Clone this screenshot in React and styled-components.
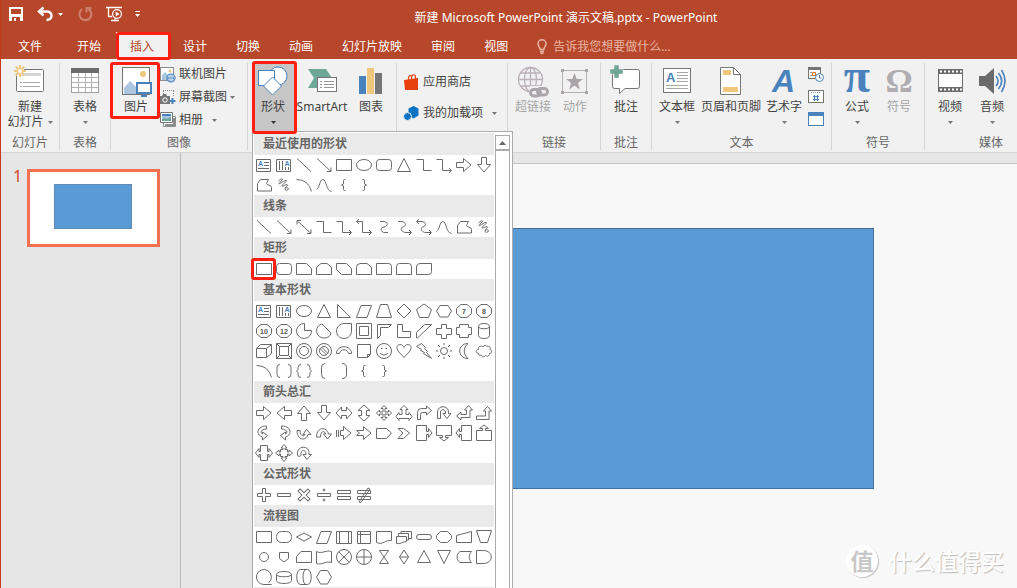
import * as React from "react";
import { useState } from "react";
import styled, { createGlobalStyle } from "styled-components";

const GlobalStyle = createGlobalStyle`
  * {
    box-sizing: border-box;
  }
  body {
    margin: 0;
    overflow: hidden;
    background: #e6e6e6;
    color: #444444;
    font-family: "Noto Sans", "Noto Sans CJK SC", sans-serif;
    font-size: 12px;
    line-height: 16px;
  }
  button, input {
    font: inherit;
    color: inherit;
    border: none;
    padding: 0;
    margin: 0;
    background: none;
  }
  svg {
    display: block;
    flex: none;
    overflow: visible;
  }
`;

const App = styled.div`
  display: flex;
  flex-direction: column;
  height: 100vh;
  overflow: hidden;
  border-left: 1px solid #c43a1c;
  position: relative;
`;

/* ---------- title bar and tabs ---------- */

const Header = styled.header`
  flex: none;
  background: #b7472a;
  color: #ffffff;
`;

const TitleBar = styled.div`
  display: flex;
  align-items: center;
  height: 32px;
  padding: 0 26px 0 8px;
`;

const QuickAccess = styled.div`
  display: flex;
  align-items: center;
  height: 28px;
  align-self: flex-start;
`;

const QuickButton = styled.button`
  display: flex;
  align-items: center;
  gap: 4px;
  margin-right: ${(props) => props.$space || 0}px;
  opacity: ${(props) => (props.disabled ? 0.3 : 1)};
`;

const Title = styled.h1`
  flex: 1;
  margin: 0;
  padding-top: 4px;
  font-size: 12px;
  font-weight: 400;
  text-align: center;
  white-space: nowrap;
`;

const Tabs = styled.nav`
  display: flex;
  align-items: stretch;
  gap: 1px;
  height: 27px;
`;

const Tab = styled.button`
  position: relative;
  padding: 2px 14px 0;
  white-space: nowrap;
  background: ${(props) => (props.$active ? "#f1f1f1" : "transparent")};
  color: ${(props) => (props.$active ? "#b7472a" : "#ffffff")};
`;

const FileTab = styled(Tab)`
  padding: 2px 20px 0 17px;
`;

const TellMe = styled.label`
  display: flex;
  align-items: center;
  gap: 6px;
  padding: 2px 0 0 14px;
  color: #e8b5a5;

  input {
    width: 160px;
    outline: none;
  }
  input::placeholder {
    color: #e8b5a5;
    opacity: 1;
  }
`;

/* red frame that points out a step of the tutorial */
const Mark = styled.span`
  position: absolute;
  inset: ${(props) => props.$inset};
  border: 3px solid #ff1e10;
  border-radius: 3px;
  pointer-events: none;
  z-index: 6;
`;

/* ---------- ribbon ---------- */

const Ribbon = styled.div`
  flex: none;
  display: flex;
  padding: 4px 0 2px;
  background: #f1f1f1;
  border-bottom: 1px solid #d5d5d5;
`;

const Group = styled.section`
  flex: none;
  width: ${(props) => props.$width}px;
  border-right: 1px solid #d5d5d5;
`;

const GroupBody = styled.div`
  display: flex;
  height: 72px;
  padding-left: ${(props) => props.$indent || 0}px;
`;

const GroupLabel = styled.div`
  height: 15px;
  line-height: 16px;
  text-align: center;
  color: #666666;
`;

const LargeButton = styled.button`
  position: relative;
  flex: none;
  display: flex;
  flex-direction: column;
  align-items: center;
  width: ${(props) => props.$width}px;
  padding-top: 3px;
  white-space: nowrap;
  background: ${(props) => (props.$pressed ? "#c6c6c6" : "transparent")};
  color: ${(props) => (props.disabled ? "#a6a6a6" : "#444444")};
`;

const ButtonText = styled.span`
  padding-top: 1px;
`;

const SecondLine = styled.span`
  display: flex;
  align-items: center;
  gap: 4px;
  height: 14px;
`;

const SmallColumn = styled.div`
  display: flex;
  flex-direction: column;
  gap: ${(props) => props.$gap || 1}px;
  padding-top: ${(props) => props.$top || 0}px;
`;

const SmallButton = styled.button`
  display: flex;
  align-items: center;
  gap: 3px;
  height: 22px;
  white-space: nowrap;

  svg:last-child:not(:first-child) {
    margin-left: ${(props) => props.$caretGap || 0}px;
  }
`;

const MenuAnchor = styled.div`
  position: relative;
  display: flex;
`;

/* ---------- shapes menu ---------- */

const Menu = styled.div`
  position: absolute;
  top: 68px;
  left: 0;
  z-index: 5;
  display: flex;
  padding: 1px 2px 0 1px;
  background: #ffffff;
  border: 1px solid #ababab;
`;

const Gallery = styled.div`
  width: 240px;
`;

const GalleryHeading = styled.h2`
  height: 22px;
  margin: 0;
  padding-left: 9px;
  background: #eaeaea;
  color: #666666;
  font-size: 12px;
  font-weight: 700;
  line-height: 22px;
`;

const ShapeGrid = styled.div`
  display: grid;
  grid-template-columns: repeat(12, 20px);
  grid-auto-rows: 20px;
`;

const ShapeButton = styled.button`
  position: relative;
  width: 20px;
  height: 20px;

  svg {
    fill: none;
    stroke: #6a6a6a;
  }
  text {
    stroke: none;
    fill: #555555;
    font: 700 7px "Liberation Sans", sans-serif;
    text-anchor: middle;
  }
  .letter {
    fill: #4a82bd;
    font-size: 7px;
  }
`;

const Scrollbar = styled.div`
  display: flex;
  flex-direction: column;
  width: 15px;
  margin: 2px 0 0 1px;
`;

const ScrollUp = styled.button`
  display: flex;
  align-items: center;
  justify-content: center;
  height: 15px;
  border: 1px solid #ababab;
`;

const ScrollThumb = styled.div`
  flex: 1;
  border: 1px solid #ababab;
`;

/* ---------- slides ---------- */

const Workspace = styled.main`
  flex: 1;
  display: flex;
  min-height: 0;
`;

const SlidePane = styled.aside`
  flex: none;
  display: flex;
  align-items: flex-start;
  width: 180px;
  padding: 16px 20px 0 12px;
  border-right: 1px solid #bcbcbc;
`;

const SlideNumber = styled.span`
  width: 14px;
  color: #d24726;
  font-size: 16px;
  line-height: 14px;
`;

const Thumbnail = styled.button`
  display: flex;
  align-items: center;
  justify-content: center;
  flex: none;
  width: 133px;
  height: 78px;
  padding: 0 2px 4px 0;
  background: #ffffff;
  border: 3px solid #f37053;
`;

const ThumbnailShape = styled.span`
  width: 78px;
  height: 45px;
  background: #5b9bd5;
  border: 1px solid #5f8bb5;
`;

const Slide = styled.div`
  flex: 1;
  margin: 10px 0 0 102px;
  padding: 64px 143px 0 139px;
  background: #f8f8f8;
  border-top: 1px solid #c6c6c6;
`;

const SlideShape = styled.div`
  height: 261px;
  background: #5b9bd5;
  border: 1px solid #41719c;
`;

const Watermark = styled.div`
  position: absolute;
  right: 13px;
  bottom: 11px;
  display: flex;
  align-items: flex-start;
  gap: 11px;
  height: 32px;
  color: #ffffff;
  font-family: "Noto Sans CJK SC", sans-serif;
  font-size: 23px;
  font-weight: 500;
  line-height: 30px;
  text-shadow: 1px 1px 1px #bdbdbd;
`;

const WatermarkBadge = styled.span`
  width: 32px;
  height: 32px;
  border-radius: 50%;
  background: #ffffff;
  box-shadow: 1px 1px 1px #c4c4c4;
  color: #c8c8c8;
  font-weight: 700;
  text-align: center;
  text-shadow: none;
`;

/* ---------- icons ---------- */

const BLUE = "#4a82bd";
const GOLD = "#eec77c";
const GREEN = "#6fa796";
const GREY = "#767676";

const Caret = ({ color = "#777777" }) => (
  <svg width="5" height="3" viewBox="0 0 5 3">
    <path d="M0 0h5L2.500 3z" fill={color} />
  </svg>
);

const Icon = ({ size = 32, children }) => (
  <svg width={size} height={size} viewBox={`0 0 ${size} ${size}`} fill="none">
    {children}
  </svg>
);

const icons = {
  save: (
    <Icon size={16}>
      <path d="M0 1h14v14H0zM2 3v5h10V3zM3 11v4h8v-4z" fill="#fff" fillRule="evenodd" />
      <path d="M5 12h2v3H5z" fill="#fff" />
    </Icon>
  ),
  undo: (
    <Icon size={16}>
      <path d="M1 5.500h7.500c3.500 0 5 1.700 5 4.300 0 2.500-2 4.200-5 4.200" stroke="#fff" strokeWidth="2.400" />
      <path d="M5.500 1.500L1 5.500l4.500 4" stroke="#fff" strokeWidth="2.400" />
    </Icon>
  ),
  redo: (
    <Icon size={16}>
      <path d="M5 3.200A6 6 0 1 0 11.500 3" stroke="#fff" strokeWidth="2.200" />
      <path d="M9.500 1v5.500M8.500 2h6" stroke="#fff" strokeWidth="2" />
    </Icon>
  ),
  show: (
    <Icon size={16}>
      <path d="M0 1.500h16M2.500 2v8.500H6M5 14.500h8M9 12.500v2" stroke="#fff" strokeWidth="1.300" />
      <circle cx="11" cy="8" r="4.400" fill="#b7472a" stroke="#fff" strokeWidth="1.200" />
      <path d="M9.700 5.500v5L13.500 8z" fill="#fff" />
    </Icon>
  ),
  more: (
    <svg width="7" height="7" viewBox="0 0 7 7">
      <path d="M1 0h5v1H1zM1 3h5L3.500 6z" fill="#fff" />
    </svg>
  ),
  bulb: (
    <svg width="10" height="15" viewBox="0 0 10 15" fill="none" stroke="#e8b5a5" strokeWidth="1.500">
      <path d="M3.200 10.500C3.200 8.500 1 7.500 1 4.800a4 4 0 0 1 8 0c0 2.700-2.200 3.700-2.200 5.700zM3 12.500h4M3.500 14.300h3" />
    </svg>
  ),
  newSlide: (
    <Icon>
      <rect x="2.500" y="3.500" width="27" height="22" rx="1" fill="#fff" stroke={GREY} />
      <path d="M6 7h21v3H6z" fill="#d4d4d4" />
      <path d="M6 16.500h2m1 0h17M6 20.500h2m1 0h17" stroke="#a8a8a8" />
      <circle cx="6" cy="5" r="4.500" fill="#f1f1f1" />
      <path d="M6-1v12M0 5h12M1.800.8l8.400 8.400M10.200.8L1.800 9.200" stroke={GOLD} strokeWidth="2" />
      <circle cx="6" cy="5" r="2" fill="#fff" />
    </Icon>
  ),
  table: (
    <Icon>
      <rect x="2.500" y="2.500" width="27" height="24" fill="#fff" stroke="#a0a0a0" />
      <path d="M9.500 7v19M16.500 7v19M22.500 7v19M3 11.500h26M3 16.500h26M3 21.500h26" stroke="#b4b4b4" />
      <path d="M2 2h28v5H2z" fill="#6d6d6d" />
    </Icon>
  ),
  picture: (
    <Icon>
      <rect x="2.500" y="1.500" width="27" height="27" fill="#fff" stroke={GREY} />
      <circle cx="23" cy="8" r="3" fill={GOLD} />
      <path d="M4 28v-6l6-7 8 8v5z" fill="#adc6e0" />
      <rect x="17" y="17" width="14" height="10" fill="#fff" stroke={BLUE} strokeWidth="2" />
      <path d="M23 28h2v1h2v2h-6v-2h2z" fill={BLUE} />
    </Icon>
  ),
  onlinePicture: (
    <Icon size={16}>
      <rect x=".5" y="1.500" width="13" height="13" fill="#fff" stroke="#8c8c8c" />
      <circle cx="10" cy="5" r="1.500" fill={GOLD} />
      <path d="M2 14V9l3-3 3 3v5z" fill="#adc6e0" />
      <circle cx="11" cy="12" r="4" fill="#fff" stroke={BLUE} strokeWidth="1.200" />
      <path d="M7 12h8M11 8v8M9.500 8.500c-1 2-1 5 0 7M12.500 8.500c1 2 1 5 0 7" stroke={BLUE} strokeWidth=".8" />
    </Icon>
  ),
  screenshot: (
    <Icon size={16}>
      <path d="M3 1.500h12M3.500 2v5M13.500 2v5" stroke="#8c8c8c" strokeDasharray="1 1" />
      <path d="M0 7h2l1-2h3l1 2h3v8H0z" fill={GREY} />
      <circle cx="5" cy="11" r="2.200" fill={GREY} stroke="#fff" />
      <path d="M12.500 9v6M9.500 12h6" stroke={BLUE} strokeWidth="2" />
    </Icon>
  ),
  album: (
    <Icon size={16}>
      <path d="M3.500 4.500h12v10h-12z" fill="#fff" stroke="#8c8c8c" />
      <path d="M.5.500h12v10H.5z" fill="#fff" stroke={GREY} />
      <path d="M2 2h9v7H2z" fill="#a5c5e4" />
      <path d="M2 2h9v2H2z" fill={BLUE} />
      <path d="M2 9V7l3-1 2 1 4-2v4z" fill={GREEN} />
      <path d="M14 6v7H5" stroke="#8c8c8c" strokeWidth="2" />
    </Icon>
  ),
  shapes: (
    <Icon>
      <circle cx="21" cy="10" r="9" fill="#fff" stroke={BLUE} />
      <path d="M1.500 4.500h16v15h-16z" fill="#fff" stroke={BLUE} />
      <path d="M15.500 11l9 9-9 9-9-9z" fill="#fff" stroke={BLUE} />
    </Icon>
  ),
  smartArt: (
    <Icon>
      <path d="M2 3h18l6 9-6 10H2l6-10z" fill={GREEN} />
      <rect x="11.500" y="11.500" width="19" height="14" fill="#fff" stroke={GREY} />
      <path d="M14 15.500h2m2 0h10M14 18.500h2m2 0h10M14 21.500h2m2 0h10" stroke="#999" />
    </Icon>
  ),
  chart: (
    <Icon>
      <path d="M4 10h7v18H4z" fill={BLUE} />
      <path d="M12 2h7v26h-7z" fill={GOLD} />
      <path d="M20 7h7v21h-7z" fill={GREY} />
    </Icon>
  ),
  store: (
    <Icon size={16}>
      <path d="M0 6l14-2v12H1z" fill="#e8400c" />
      <path d="M4.500 8V4c0-3 3-3 3.500-1M7.500 6V3c0-3 4-3 4 0v3" stroke="#e8400c" strokeWidth="1.200" />
    </Icon>
  ),
  addin: (
    <Icon size={16}>
      <path d="M9.500 1l5 2.500v7l-5 3-5-3v-7z" fill="#0b72c4" />
      <circle cx="3.500" cy="11.500" r="4" fill="#0b72c4" stroke="#f1f1f1" />
    </Icon>
  ),
  link: (
    <Icon>
      <g stroke="#b9b2b9" strokeWidth="1.300">
        <circle cx="13.500" cy="13.500" r="12" />
        <ellipse cx="13.500" cy="13.500" rx="6" ry="12" />
        <path d="M13.500 1.500v24M1.500 13.500h24M3.500 7h20M3.500 20h20" />
      </g>
      <path d="M13 20h12v2h7v10H14l-2-4z" fill="#f1f1f1" />
      <g stroke="#aaa6aa" strokeWidth="3">
        <rect x="13.500" y="23.500" width="10" height="6.500" rx="3.200" />
        <rect x="20.500" y="22.500" width="10" height="6.500" rx="3.200" />
      </g>
    </Icon>
  ),
  action: (
    <Icon>
      <path d="M3.500 4.500h24v22h-24z" stroke="#b5b0b5" />
      <path d="M2 3h3v3H2zM26 3h3v3h-3zM2 25h3v3H2zM26 25h3v3h-3z" fill="#a8a4a8" />
      <path d="M15.500 7l2.200 6h6.300l-5 4 1.800 6.500-5.300-4-5.300 4L12 17l-5-4h6.300z" fill="#a8a4a8" />
    </Icon>
  ),
  comment: (
    <Icon>
      <path d="M4.500 3.500h23a2 2 0 0 1 2 2v15a2 2 0 0 1-2 2H15L9.500 27.500v-5h-5a2 2 0 0 1-2-2v-15a2 2 0 0 1 2-2z" fill="#fff" stroke={GREY} />
      <path d="M4-1h5v4h4v5H9v4H4V8H0V3h4z" fill={GREEN} stroke="#f1f1f1" strokeWidth=".5" />
    </Icon>
  ),
  textBox: (
    <Icon>
      <rect x="2.500" y="2.500" width="27" height="24" fill="#fff" stroke={GREY} />
      <text x="5" y="16" fontFamily="Liberation Sans" fontWeight="700" fontSize="13" fill={BLUE}>A</text>
      <path d="M16 6.500h11M16 9.500h11M16 12.500h11M16 15.500h11M5 19.500h22M5 22.500h22" stroke="#a8a8a8" />
    </Icon>
  ),
  headerFooter: (
    <Icon>
      <path d="M5.500 1.500h13l7 7v20h-20z" fill="#fff" stroke={GREY} />
      <path d="M18.500 1.500v7h7" stroke={GREY} />
      <path d="M8 4h8v5H8zM8 21h15v5H8z" fill={GOLD} />
    </Icon>
  ),
  wordArt: (
    <Icon>
      <text x="4" y="26" fontFamily="Liberation Sans" fontStyle="italic" fontWeight="700" fontSize="32" fill={BLUE}>A</text>
    </Icon>
  ),
  date: (
    <Icon size={16}>
      <rect x=".5" y="1.500" width="12" height="11" fill="#fff" stroke={GREY} />
      <path d="M0 1h13v3H0z" fill={GREY} />
      <path d="M2 6.500h2m2 0h2M2 9.500h2m0 0h4" stroke="#999" />
      <path d="M4.500 6.500h3v3h-3z" stroke="#e07b2c" />
      <circle cx="11.500" cy="11.500" r="4" fill="#fff" stroke={BLUE} />
      <path d="M11.500 9v3h2" stroke={BLUE} />
    </Icon>
  ),
  slideNo: (
    <Icon size={16}>
      <rect x=".5" y="1.500" width="15" height="12" fill="#fff" stroke={GREY} />
      <path d="M3 3.500h10" stroke="#999" strokeDasharray="1 1" />
      <path d="M6.500 6v6M9.500 6v6M5 7.500h6M5 10.500h6" stroke={BLUE} />
    </Icon>
  ),
  object: (
    <Icon size={16}>
      <rect x=".5" y=".5" width="15" height="13" fill="#fff" stroke={BLUE} />
      <path d="M0 0h16v4H0z" fill={BLUE} />
    </Icon>
  ),
  equation: (
    <Icon>
      <text x="16" y="26" textAnchor="middle" fontFamily="Liberation Serif" fontWeight="700" fontSize="48" fill={BLUE}>π</text>
    </Icon>
  ),
  symbol: (
    <Icon>
      <text x="16" y="26" textAnchor="middle" fontFamily="Liberation Serif" fontWeight="700" fontSize="34" fill="#b0adb0">Ω</text>
    </Icon>
  ),
  video: (
    <Icon>
      <path d="M4 3h25v23H4z" fill="#6b6b6b" />
      <path d="M5 8h23v13H5z" fill="#fff" />
      <path d="M6 5.500h22M6 23.500h22" stroke="#fff" strokeWidth="2" strokeDasharray="2 2" />
    </Icon>
  ),
  audio: (
    <Icon>
      <path d="M3 10h6l9-8v26l-9-8H3z" fill="#6b6b6b" />
      <path d="M20 10c2.500 3 2.500 7 0 10M22.500 7c4 5 4 11 0 16M25.500 4c4.500 7 4.500 15 0 22" stroke={BLUE} strokeWidth="1.600" />
    </Icon>
  ),
};

/* ---------- gallery shapes, drawn in a 20px cell ---------- */

const p = (d) => <path d={d} />;
const turn = (d, angle) => <path d={d} transform={`rotate(${angle} 10 10)`} />;
const flip = (d) => <path d={d} transform="matrix(-1 0 0 1 20 0)" />;
const octagon = "M7 3.500h6l4.500 4v5l-4.500 4H7l-4.500-4v-5z";
const numbered = (n) => (
  <>
    {p(octagon)}
    <text x="10" y="12.500">{n}</text>
  </>
);
const disc = (r, inner) => (
  <>
    <circle cx="10" cy="10" r={r} />
    {inner && p(inner)}
  </>
);

const blockArrow = "M2.500 7.500h7v-4l7.500 6.500-7.500 6.500v-4h-7z";
const doubleArrow = "M2 10l5.500-6v3.500h5V4l5.500 6-5.500 6v-3.500h-5V16z";
const callout = "M2.500 2.500h10v6h2v-3l3.500 4.500-3.500 4.500v-3h-2v6h-10z";
const uTurn = "M3.500 15.500V9c0-7 11-7 11 0v1.500h2.500l-4 5-4-5h2.500V9c0-3-5-3-5 0v6.500z";
const bent = "M3.500 16.500v-7q0-4 4-4h5v-2.500l5 4.500-5 4.500V9.500h-4q-2 0-2 2v5z";
const curved = "M12.500 3c-10 0-11 9-4 11v3l5-4.500-5-3.500v2c-3-1.500-1-5 4-5z";

const shapes = {
  textBox: (
    <>
      {p("M2.500 4.500h14v12h-14zM10 7.500h5M10 10.500h5M4 13.500h11")}
      <text className="letter" x="6.500" y="11">A</text>
    </>
  ),
  verticalTextBox: (
    <>
      {p("M2.500 4.500h14v12h-14zM5.500 6v9M8.500 6v9M11.500 12v3M14.500 12v3")}
      <text className="letter" x="13" y="11">A</text>
    </>
  ),
  line: p("M3 3.500l14 13"),
  arrow: p("M3 3.500l14 13M13 16.500h4v-4"),
  doubleLine: p("M3 3.500l14 13M13 16.500h4v-4M3 7.500v-4h4"),
  elbow: p("M2.500 4.500h7v11h8"),
  elbowArrow: p("M2.500 4.500h6v11h9M15 13l2.500 2.500L15 18"),
  elbowDouble: p("M2.500 4.500h6v11h9M15 13l2.500 2.500L15 18M5 2L2.500 4.500 5 7"),
  curve: p("M6 4.500h3c6 0 5 5 1 5.500s-4 5.500 1 5.500h3"),
  curveArrow: p("M4 4.500h3c6 0 5 5 2 5.500s-2 5.500 3 5.500h5M15 13l2.500 2.500L15 18"),
  curveDouble: p("M3 4.500h4c6 0 5 5 2 5.500s-2 5.500 3 5.500h5M15 13l2.500 2.500L15 18M5 2L2.500 4.500 5 7"),
  wave: p("M2.500 14.500c3.500-2 3-9.500 6-10 4-.5 3.500 11.500 9 12"),
  freeform: p("M3.500 8.500l3-4h8l-2 4c0 2 5 1 5 4v3.500h-14z"),
  scribble: p("M4.500 6c2-2 4-3 4-1.500L5 8.500c0 1.500 6-4 7.500-3 1 1-5 4-4.500 5.500.5 1 4-2 5-1.500 2 1-3 3-2 5 1 1.500 4 .5 3.500-1-.5-1-3-1-3.500 0"),
  arc: p("M2.500 4.500q12 0 15 12"),
  rect: p("M2.500 4.500h15v11h-15z"),
  ellipse: <ellipse cx="10" cy="10" rx="7.500" ry="5.500" />,
  roundRect: <rect x="2.500" y="4.500" width="15" height="11" rx="3" />,
  snipOne: p("M2.500 4.500h10l5 5v6h-15z"),
  snipTwo: p("M7 4.500h6l4.500 4v7h-15v-7z"),
  snipDiagonal: p("M2.500 4.500h10l5 5v6h-10l-5-5z"),
  snipRound: p("M6 4.500h7l4.500 4v7h-15v-7q0-4 4-4z"),
  roundOne: p("M2.500 4.500h12q3 0 3 3v8h-15z"),
  roundTwo: p("M5.500 4.500h9q3 0 3 3v8h-15v-8q0-3 3-3z"),
  roundDiagonal: p("M6 4.500h11.500v8q0 3-3 3h-12V8q0-3.500 3.500-3.500z"),
  triangle: p("M10 3.500l6.500 13h-13z"),
  rightTriangle: p("M3.500 3.500l13 13h-13z"),
  parallelogram: p("M7 4.500h10.500l-4.500 12H2.500z"),
  trapezoid: p("M6.500 3.500h7l4 13h-15z"),
  diamond: p("M10 3l7 7-7 7-7-7z"),
  pentagon: p("M10 3l7.500 5.500-3 8h-9l-3-8z"),
  hexagon: p("M6 4.500h8l3.500 5.500-3.500 6H6L2.500 10z"),
  seven: numbered(7),
  eight: numbered(8),
  ten: numbered(10),
  twelve: numbered(12),
  pie: p("M10.500 2.500v7h7A7.500 7.500 0 1 1 10.500 2.500z"),
  chord: p("M8 3l9 9c-1 6-10 6.500-13 2S3 4.500 8 3z"),
  teardrop: p("M17.500 2.500V10c0 4-3 7.500-7.500 7.500S2.500 14 2.500 10 6 2.500 10 2.500z"),
  frame: p("M2.500 2.500h15v15h-15zM5.500 5.500h9v9h-9z"),
  halfFrame: p("M3.500 3.500h14l-3 3h-8v8l-3 3z"),
  corner: p("M3.500 3.500h5v7h8v6h-13z"),
  stripe: p("M2.500 11.500l8-8h7l-14 13.500h-1z"),
  cross: p("M7.500 3.500h5v4h5v6h-5v4h-5v-4h-5v-6h5z"),
  plaque: p("M5.500 3.500h9v3h3v7h-3v3h-9v-3h-3v-7h3z"),
  can: p("M4.500 5.500c0-4 11-4 11 0v9c0 4-11 4-11 0zc0 3 11 3 11 0"),
  cube: p("M2.500 7.500h10v9h-10zl4-4h11v9l-5 4M12.500 7.500l5-4"),
  bevel: p("M2.500 2.500h15v15h-15zM5.500 5.500h9v9h-9zM2.500 2.500l3 3M17.500 2.500l-3 3M2.500 17.500l3-3M17.500 17.500l-3-3"),
  donut: (
    <>
      {disc(7.5)}
      {disc(4.5)}
    </>
  ),
  noSymbol: (
    <>
      {disc(7.5)}
      {disc(4.5, "M6 7.500l6.500 6.500M7.500 6l6.500 6.500")}
    </>
  ),
  blockArc: p("M2.500 12.500c0-9 15-9 15 0h-3c-1-5-8-5-9 0z"),
  folded: p("M3.500 3.500h13v10l-3 3h-10zM13.500 16.500v-3h3"),
  smiley: disc(7.5, "M6 12q4 4 8 0M7 7.500h1.500M11.500 7.500H13"),
  heart: p("M10 6.500c2-5 8-3 7 1-1 4-5 6-7 9-2-3-6-5-7-9-1-4 5-6 7-1z"),
  lightning: p("M2.500 5.500l5-3 4 4-1 1 3 3-1 1 5 6-8-5 1-1-4-2 1-1z"),
  sun: disc(3.5, "M10 2v2M10 16v2M2 10h2M16 10h2M4 4l2 2M14 14l2 2M4 16l2-2M14 6l2-2"),
  moon: p("M14 2.500c-11 0-11 15 0 15-5-4-5-11 0-15z"),
  cloud: p("M4.500 12.500c-3-.5-3-4 0-4-1-3 3-4.500 4.500-2.500 1-2 3.500-2 4-.5 2.500-1 4 1 3 3 2.500 1 2 4-.5 4 0 3-3 3.500-4 2-1.500 2-4 1.500-4-.5-2 1-3.500 0-3-1.500z"),
  doubleBracket: p("M6 3.500q-3 0-3 3v7q0 3 3 3M14 3.500q3 0 3 3v7q0 3-3 3"),
  doubleBrace: p("M7 3.500q-3 0-3 3v2L2.500 10 4 11.500v2q0 3 3 3M13 3.500q3 0 3 3v2l1.500 1.500-1.500 1.500v2q0 3-3 3"),
  leftBracket: p("M11 2.500q-3.500 0-3.500 4v7q0 4 3.500 4"),
  rightBracket: p("M8 2.500q4.500 0 4.500 4v7q0 4-4.500 4"),
  leftBrace: p("M11.500 4.500h-1q-1 0-1 1V9l-2 1 2 1v3.500q0 1 1 1h1"),
  rightBrace: p("M8.500 4.500h1q1 0 1 1V9l2 1-2 1v3.500q0 1-1 1h-1"),
  rightArrow: p(blockArrow),
  leftArrow: turn(blockArrow, 180),
  upArrow: turn(blockArrow, -90),
  downArrow: turn(blockArrow, 90),
  leftRight: p(doubleArrow),
  upDown: turn(doubleArrow, 90),
  quad: p("M10 2.500l3 3h-2v3.500h3.500V7l3 3-3 3v-2H11v3.500h2l-3 3-3-3h2V11H5.500v2l-3-3 3-3v2H9V5.500H7z"),
  leftRightUp: p("M10 2.500l4 4h-2v5h3v-2l3 4-3 4v-2H5v2l-3-4 3-4v2h3v-5H6z"),
  bent: p(bent),
  uTurn: p(uTurn),
  leftUp: p("M14.500 2.500l4 4.500h-2.500v7.500H7V17l-4.500-4L7 9v2.500h5.500V7H10.500z"),
  bentUp: p("M13.500 3.500l4 4.500h-2.500v8.500h-12.500v-3.500h9V8h-2z"),
  curvedRight: p(curved),
  curvedLeft: flip(curved),
  curvedUp: turn(curved, -90),
  curvedDown: p("M2.500 14c0-10 10-11 12-3h3l-4 5-4-5h2c-1-4-5-3-5 3z"),
  striped: p("M2.500 7v7M4.500 7v7M6.500 7.500h3v-4L17 10l-7.500 6.500v-4h-3z"),
  notched: p("M2.500 7.500h7v-4l7.500 6.500-7.500 6.500v-4h-7l3-2.500z"),
  pentagonArrow: p("M2.500 5.500h10l5 4.500-5 5.500h-10z"),
  chevron: p("M4 5.500h5.500L15.500 10l-6 5.500H4L9 10z"),
  rightCallout: p(callout),
  downCallout: turn(callout, 90),
  leftCallout: turn(callout, 180),
  upCallout: turn(callout, -90),
  leftRightCallout: p("M6.500 2.500h7v6h1.500v-3l3.500 4.500-3.500 4.500v-3h-1.500v6h-7v-6H5v3L1.500 10 5 5.500v3h1.500z"),
  quadCallout: p("M10 1.500l3 3.500h-2v1.500h2.500v2.500H15V7l3.500 3-3.500 3v-2h-1.500v2.500H11V15h2l-3 3.500L7 15h2v-1.500H6.500V11H5v2l-3.500-3L5 7v2h1.500V6.500H9V5H7z"),
  circular: p("M3.500 12.500C2 2 15 2 15 9.500v2h2.500L13 16.500 9 11.500h3c0-6-6-5-5 1q-2 2-3.500 0z"),
  plus: p("M8.500 3.500h3v5h5v3h-5v5h-3v-5h-5v-3h5z"),
  minus: p("M3.500 8.500h13v3h-13z"),
  times: turn("M8.500 3h3v5.500H17v3h-5.500V17h-3v-5.500H3v-3h5.500z", 45),
  divide: (
    <>
      {p("M3.500 8.500h13v3h-13z")}
      <circle cx="10" cy="5" r="1" />
      <circle cx="10" cy="15" r="1" />
    </>
  ),
  equal: p("M3.500 5.500h13v3h-13zM3.500 11.500h13v3h-13z"),
  notEqual: p("M3.500 5.500h13v3h-13zM3.500 11.500h13v3h-13zM5 17L14 3l2 1-9 13.500z"),
  flowAlternate: <rect x="2.500" y="4.500" width="15" height="11" rx="5" />,
  decision: p("M10 6l7.500 4-7.500 4-7.500-4z"),
  predefined: p("M2.500 4.500h15v12h-15zM5.500 4.500v12M14.500 4.500v12"),
  internal: p("M3.500 4.500h13v12h-13zM6.500 4.500v12M3.500 7.500h13"),
  document: p("M2.500 4.500h15v9c-7-1-8 5-15 2z"),
  multiDocument: p("M2.500 9.500h10v5c-4 0-6 3-10 2zM4.500 9V6.500h10v6.500h-2M7 6V4.500h10.500v7H15"),
  terminator: <rect x="2.500" y="7.500" width="15" height="5" rx="2.500" />,
  preparation: p("M6.500 4.500h7l4 4v3l-4 4h-7l-4-4v-3z"),
  manualInput: p("M2.500 8.500l15-4v11h-15z"),
  manualOperation: p("M2.500 3.500h15l-4 12h-7z"),
  connector: disc(4.5),
  offPage: p("M5.500 5.500h9v6L10 15l-4.500-3.500z"),
  card: p("M7 4.500h10.500v11h-15v-6z"),
  tape: p("M2.500 4.500c5 3 10-2 15 0v11c-5-2-10 3-15 1z"),
  summing: disc(7.5, "M4.700 4.700l10.600 10.600M15.300 4.700L4.700 15.300"),
  or: disc(7.5, "M10 2.500v15M2.500 10h15"),
  collate: p("M5.500 3.500h9l-9 13h9z"),
  sort: p("M10 3l4.500 7-4.500 7-4.500-7zM5.500 10h9"),
  extract: p("M10 3.500l6.500 12h-13z"),
  merge: p("M3.500 3.500h13l-6.500 13z"),
  stored: p("M6 4.500h11.500c-3 3-3 8 0 11H6c-4-3-4-8 0-11z"),
  delay: p("M2.500 3.500H9c11 0 11 13 0 13H2.500z"),
  sequential: p("M10 17.500h7.500M15 15.500A7.500 7.500 0 1 0 10 17.500"),
  disk: p("M2.500 7.500c0-4 15-4 15 0v6c0 4-15 4-15 0zc0 3 15 3 15 0"),
  direct: p("M6.500 2.500h7c5 0 5 15 0 15h-7c-5 0-5-15 0-15zM12 2.500c-4 0-4 15 0 15"),
  display: p("M6.500 3.500h7l4 6.500-4 7h-7L2.500 10z"),
};

const sections = [
  {
    title: "最近使用的形状",
    items:
      "textBox verticalTextBox line arrow rect ellipse roundRect triangle elbow elbowArrow rightArrow downArrow freeform scribble arc wave leftBrace rightBrace",
  },
  {
    title: "线条",
    items:
      "line arrow doubleLine elbow elbowArrow elbowDouble curve curveArrow curveDouble wave freeform scribble",
  },
  {
    title: "矩形",
    marked: "rect",
    items: "rect roundRect snipOne snipTwo snipDiagonal snipRound roundOne roundTwo roundDiagonal",
  },
  {
    title: "基本形状",
    items:
      "textBox verticalTextBox ellipse triangle rightTriangle parallelogram trapezoid diamond pentagon hexagon seven eight " +
      "ten twelve pie chord teardrop frame halfFrame corner stripe cross plaque can " +
      "cube bevel donut noSymbol blockArc folded smiley heart lightning sun moon cloud " +
      "arc doubleBracket doubleBrace leftBracket rightBracket leftBrace rightBrace",
  },
  {
    title: "箭头总汇",
    items:
      "rightArrow leftArrow upArrow downArrow leftRight upDown quad leftRightUp bent uTurn leftUp bentUp " +
      "curvedRight curvedLeft curvedUp curvedDown striped notched pentagonArrow chevron rightCallout downCallout leftCallout upCallout " +
      "leftRightCallout quadCallout circular",
  },
  {
    title: "公式形状",
    items: "plus minus times divide equal notEqual",
  },
  {
    title: "流程图",
    items:
      "rect flowAlternate decision parallelogram predefined internal document multiDocument terminator preparation manualInput manualOperation " +
      "connector offPage card tape summing or collate sort extract merge stored delay " +
      "sequential disk direct display",
  },
];

const tabs = ["开始", "插入", "设计", "切换", "动画", "幻灯片放映", "审阅", "视图"];

function RibbonButton({ icon, label, width, caret, second, mark, ...rest }) {
  return (
    <LargeButton $width={width} {...rest}>
      {icons[icon]}
      <ButtonText>{label}</ButtonText>
      {(caret || second) && (
        <SecondLine>
          {second}
          <Caret color={rest.$pressed ? "#333333" : undefined} />
        </SecondLine>
      )}
      {mark && <Mark $inset={mark} />}
    </LargeButton>
  );
}

function RibbonGroup({ label, width, indent, children }) {
  return (
    <Group $width={width}>
      <GroupBody $indent={indent}>{children}</GroupBody>
      <GroupLabel>{label}</GroupLabel>
    </Group>
  );
}

function ShapesMenu() {
  return (
    <Menu>
      <Gallery>
        {sections.map((section) => (
          <div key={section.title}>
            <GalleryHeading>{section.title}</GalleryHeading>
            <ShapeGrid>
              {section.items.split(" ").map((name) => (
                <ShapeButton key={name} aria-label={name}>
                  <svg width="20" height="20" viewBox="0 0 20 20">{shapes[name]}</svg>
                  {section.marked === name && <Mark $inset="-1px -2px -1px -3px" />}
                </ShapeButton>
              ))}
            </ShapeGrid>
          </div>
        ))}
        <GalleryHeading as="div" />
      </Gallery>
      <Scrollbar>
        <ScrollUp aria-label="向上滚动">
          <svg width="7" height="4" viewBox="0 0 7 4">
            <path d="M0 4h7L3.500 0z" fill="#666666" />
          </svg>
        </ScrollUp>
        <ScrollThumb />
      </Scrollbar>
    </Menu>
  );
}

export default function PowerPoint() {
  const [activeTab, setActiveTab] = useState("插入");
  const [menuOpen, setMenuOpen] = useState(true);

  return (
    <App>
      <GlobalStyle />
      <Header>
        <TitleBar>
          <QuickAccess>
            <QuickButton aria-label="保存" $space={13}>{icons.save}</QuickButton>
            <QuickButton aria-label="撤消" $space={14}>
              {icons.undo}
              <Caret color="#ffffff" />
            </QuickButton>
            <QuickButton aria-label="恢复" disabled $space={13}>{icons.redo}</QuickButton>
            <QuickButton aria-label="从头开始" $space={12}>{icons.show}</QuickButton>
            <QuickButton aria-label="自定义快速访问工具栏">{icons.more}</QuickButton>
          </QuickAccess>
          <Title>新建 Microsoft PowerPoint 演示文稿.pptx - PowerPoint</Title>
        </TitleBar>
        <Tabs>
          <FileTab>文件</FileTab>
          {tabs.map((tab) => (
            <Tab key={tab} $active={tab === activeTab} onClick={() => setActiveTab(tab)}>
              {tab}
              {tab === "插入" && <Mark $inset="0 -3px -1px 0" />}
            </Tab>
          ))}
          <TellMe>
            {icons.bulb}
            <input aria-label="告诉我您想要做什么" placeholder="告诉我您想要做什么..." />
          </TellMe>
        </Tabs>
      </Header>

      <Ribbon>
        <RibbonGroup label="幻灯片" width={59}>
          <RibbonButton icon="newSlide" label="新建" second="幻灯片" width={58} />
        </RibbonGroup>
        <RibbonGroup label="表格" width={51}>
          <RibbonButton icon="table" label="表格" width={50} caret />
        </RibbonGroup>
        <RibbonGroup label="图像" width={137} indent={1}>
          <RibbonButton icon="picture" label="图片" width={48} mark="-1px 0 16px -2px" />
          <SmallColumn>
            <SmallButton>{icons.onlinePicture}联机图片</SmallButton>
            <SmallButton>{icons.screenshot}屏幕截图<Caret /></SmallButton>
            <SmallButton $caretGap={6}>{icons.album}相册<Caret /></SmallButton>
          </SmallColumn>
        </RibbonGroup>
        <RibbonGroup width={149} indent={4}>
          <MenuAnchor>
            <RibbonButton
              icon="shapes"
              label="形状"
              width={42}
              caret
              $pressed={menuOpen}
              mark="-2px -3px 1px 0"
              onClick={() => setMenuOpen(!menuOpen)}
            />
            {menuOpen && <ShapesMenu />}
          </MenuAnchor>
          <RibbonButton icon="smartArt" label="SmartArt" width={56} />
          <RibbonButton icon="chart" label="图表" width={42} />
        </RibbonGroup>
        <RibbonGroup width={111} indent={7}>
          <SmallColumn $gap={9} $top={8}>
            <SmallButton>{icons.store}应用商店</SmallButton>
            <SmallButton $caretGap={6}>{icons.addin}我的加载项<Caret /></SmallButton>
          </SmallColumn>
        </RibbonGroup>
        <RibbonGroup label="链接" width={93}>
          <RibbonButton icon="link" label="超链接" width={50} disabled />
          <RibbonButton icon="action" label="动作" width={34} disabled />
        </RibbonGroup>
        <RibbonGroup label="批注" width={51}>
          <RibbonButton icon="comment" label="批注" width={50} />
        </RibbonGroup>
        <RibbonGroup label="文本" width={180}>
          <RibbonButton icon="textBox" label="文本框" width={50} caret />
          <RibbonButton icon="headerFooter" label="页眉和页脚" width={58} />
          <RibbonButton icon="wordArt" label="艺术字" width={48} caret />
          <SmallColumn>
            <SmallButton aria-label="日期和时间">{icons.date}</SmallButton>
            <SmallButton aria-label="幻灯片编号">{icons.slideNo}</SmallButton>
            <SmallButton aria-label="对象">{icons.object}</SmallButton>
          </SmallColumn>
        </RibbonGroup>
        <RibbonGroup label="符号" width={93} indent={4}>
          <RibbonButton icon="equation" label="公式" width={42} caret />
          <RibbonButton icon="symbol" label="符号" width={42} disabled />
        </RibbonGroup>
        <RibbonGroup label="媒体" width={133} indent={4}>
          <RibbonButton icon="video" label="视频" width={42} caret />
          <RibbonButton icon="audio" label="音频" width={42} caret />
        </RibbonGroup>
      </Ribbon>

      <Workspace>
        <SlidePane>
          <SlideNumber>1</SlideNumber>
          <Thumbnail aria-label="幻灯片 1">
            <ThumbnailShape />
          </Thumbnail>
        </SlidePane>
        <Slide>
          <SlideShape />
        </Slide>
      </Workspace>

      <Watermark>
        <WatermarkBadge>值</WatermarkBadge>
        什么值得买
      </Watermark>
    </App>
  );
}
